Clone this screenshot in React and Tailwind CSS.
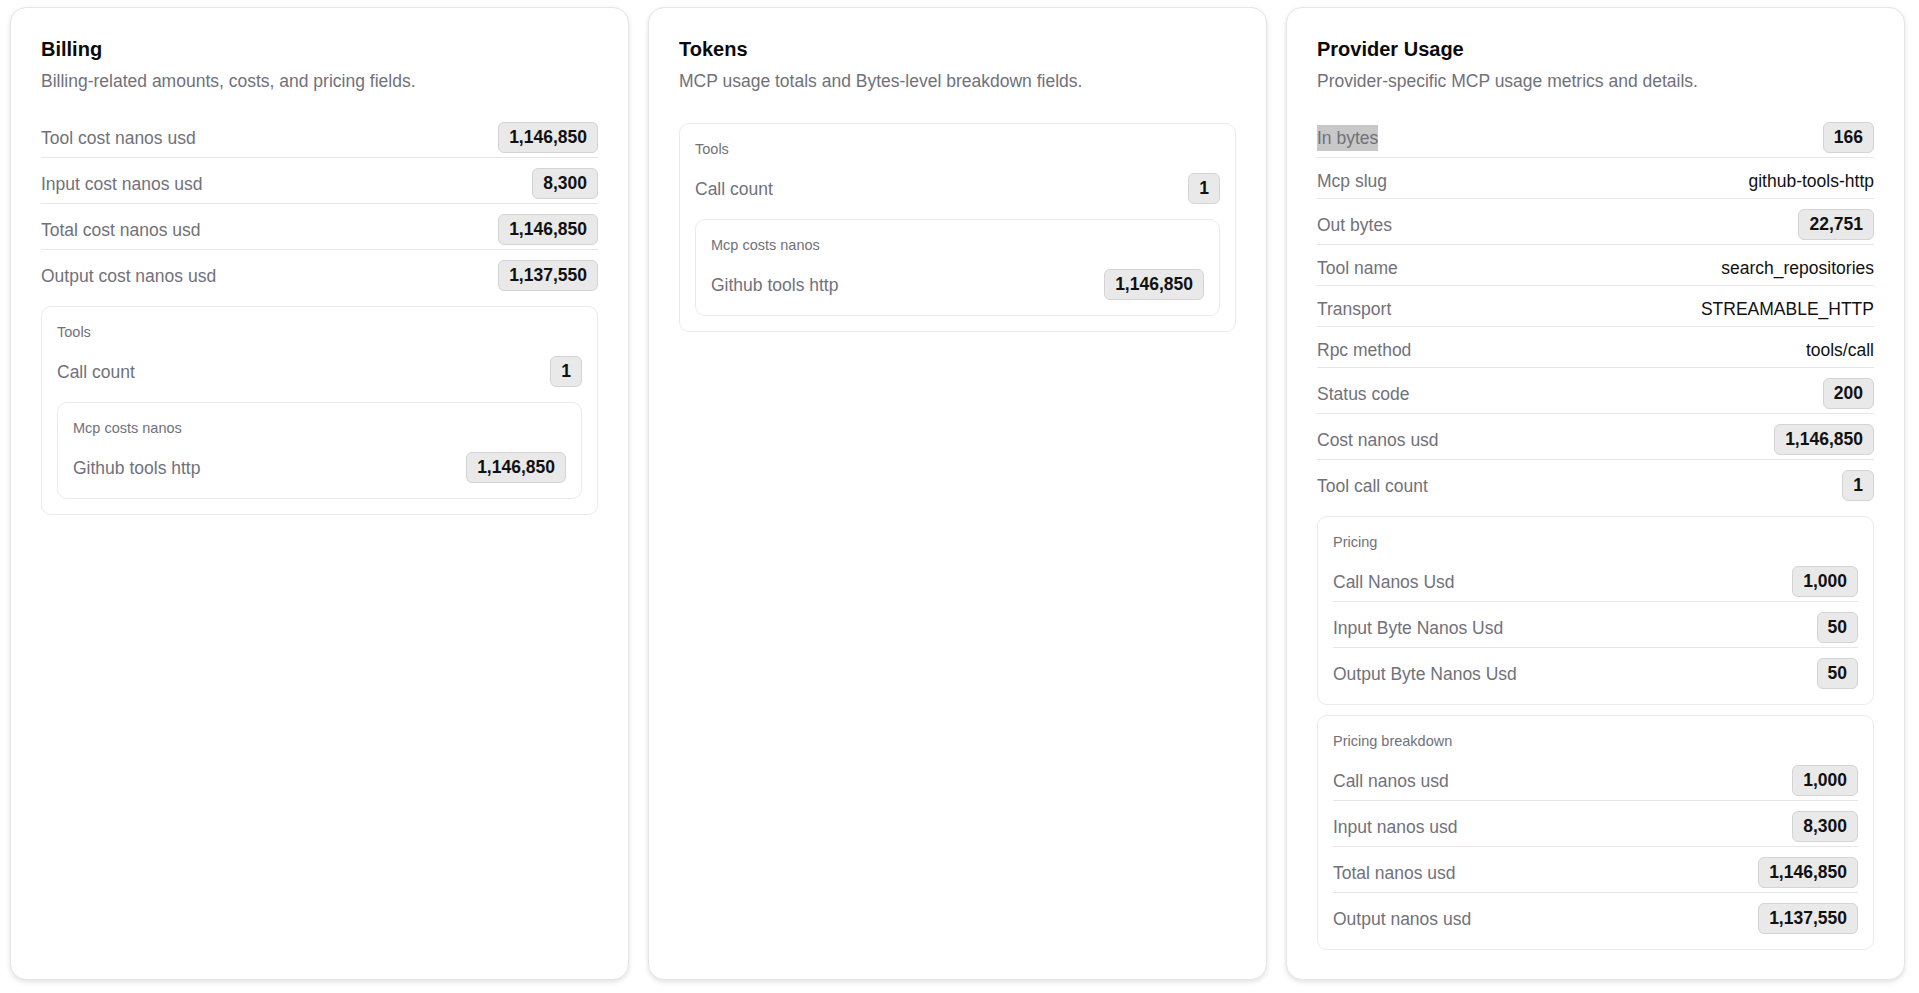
import React from "react";

const FONT = { fontFamily: '"Liberation Sans", Arial, sans-serif' };

function Badge({ children }) {
  return (
    <span className="inline-flex items-center rounded-[6px] border border-[#d4d4d4] bg-[#e9e9e9] px-[10px] py-[2px] text-[17.5px] leading-[25px] font-bold text-[#111111]">
      {children}
    </span>
  );
}

function Row({ label, value, text, last, highlight }) {
  return (
    <div
      className={
        "flex items-center justify-between pt-[10px] pb-[4px] " +
        (last ? "" : "border-b border-[#e6e6e6]")
      }
    >
      <span
        className={
          "text-[17.5px] leading-[26px] text-[#71717a] " +
          (highlight ? "bg-[#c8c8c8]" : "")
        }
      >
        {label}
      </span>
      {text ? (
        <span className="text-[17.5px] leading-[26px] text-[#111111]">{value}</span>
      ) : (
        <Badge>{value}</Badge>
      )}
    </div>
  );
}

function Rows({ rows }) {
  if (!rows || rows.length === 0) return <div />;
  return (
    <div className="flex flex-col">
      {rows.map((r, i) => (
        <Row key={i} {...r} last={i === rows.length - 1} />
      ))}
    </div>
  );
}

function Boxes({ boxes }) {
  if (!boxes || boxes.length === 0) return null;
  return (
    <div className="flex flex-col gap-[10px]">
      {boxes.map((b, i) => (
        <Box key={i} {...b} />
      ))}
    </div>
  );
}

function Box({ title, rows, boxes }) {
  const hasBoxes = boxes && boxes.length > 0;
  return (
    <div
      className={
        "rounded-[10px] border border-[#ebebeb] bg-white px-[15px] pt-[15px] " +
        (hasBoxes ? "pb-[15px]" : "pb-[11px]")
      }
    >
      <div className="mb-[4px] text-[14.5px] leading-[20px] text-[#71717a]">{title}</div>
      <div className="flex flex-col gap-[11px]">
        <Rows rows={rows} />
        <Boxes boxes={boxes} />
      </div>
    </div>
  );
}

function Card({ title, desc, rows, boxes }) {
  return (
    <div className="flex flex-col rounded-[16px] border border-[#e5e5e5] bg-white px-[30px] pt-[29px] shadow-[0_2px_5px_rgba(0,0,0,0.12)]">
      <div className="text-[20px] leading-[24px] font-bold text-[#0a0a0a]">{title}</div>
      <div className="mt-[7px] text-[17.5px] leading-[26px] text-[#71717a]">{desc}</div>
      <div className="mt-[18px] flex flex-col gap-[11px]">
        <Rows rows={rows} />
        <Boxes boxes={boxes} />
      </div>
    </div>
  );
}

const toolsBox = {
  title: "Tools",
  rows: [{ label: "Call count", value: "1" }],
  boxes: [
    {
      title: "Mcp costs nanos",
      rows: [{ label: "Github tools http", value: "1,146,850" }],
    },
  ],
};

export default function App() {
  return (
    <div
      className="grid h-[993px] grid-cols-3 gap-[19px] bg-white pt-[7px] pb-[13px] pl-[10px] pr-[14px]"
      style={FONT}
    >
      <Card
        title="Billing"
        desc="Billing-related amounts, costs, and pricing fields."
        rows={[
          { label: "Tool cost nanos usd", value: "1,146,850" },
          { label: "Input cost nanos usd", value: "8,300" },
          { label: "Total cost nanos usd", value: "1,146,850" },
          { label: "Output cost nanos usd", value: "1,137,550" },
        ]}
        boxes={[toolsBox]}
      />
      <Card
        title="Tokens"
        desc="MCP usage totals and Bytes-level breakdown fields."
        rows={[]}
        boxes={[toolsBox]}
      />
      <Card
        title="Provider Usage"
        desc="Provider-specific MCP usage metrics and details."
        rows={[
          { label: "In bytes", value: "166", highlight: true },
          { label: "Mcp slug", value: "github-tools-http", text: true },
          { label: "Out bytes", value: "22,751" },
          { label: "Tool name", value: "search_repositories", text: true },
          { label: "Transport", value: "STREAMABLE_HTTP", text: true },
          { label: "Rpc method", value: "tools/call", text: true },
          { label: "Status code", value: "200" },
          { label: "Cost nanos usd", value: "1,146,850" },
          { label: "Tool call count", value: "1" },
        ]}
        boxes={[
          {
            title: "Pricing",
            rows: [
              { label: "Call Nanos Usd", value: "1,000" },
              { label: "Input Byte Nanos Usd", value: "50" },
              { label: "Output Byte Nanos Usd", value: "50" },
            ],
          },
          {
            title: "Pricing breakdown",
            rows: [
              { label: "Call nanos usd", value: "1,000" },
              { label: "Input nanos usd", value: "8,300" },
              { label: "Total nanos usd", value: "1,146,850" },
              { label: "Output nanos usd", value: "1,137,550" },
            ],
          },
        ]}
      />
    </div>
  );
}
